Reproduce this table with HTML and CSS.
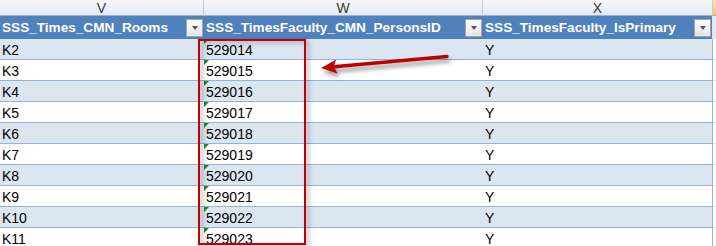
FILE: index.html
```html
<!DOCTYPE html>
<html>
<head>
<meta charset="utf-8">
<link rel="stylesheet" href="styles.css">
</head>
<body>
<div class="sheet">
  <div class="row letters">
    <div class="c v">V</div><div class="c w">W</div><div class="c x">X</div><div class="c y"></div>
  </div>
  <div class="row thead">
    <div class="c v"><span class="t">SSS_Times_CMN_Rooms</span><span class="dd"></span></div>
    <div class="c w"><span class="t">SSS_TimesFaculty_CMN_PersonsID</span><span class="dd"></span></div>
    <div class="c x"><span class="t">SSS_TimesFaculty_IsPrimary</span><span class="dd"></span></div>
    <div class="c y"></div>
  </div>
  <div class="row data odd"><div class="c v">K2</div><div class="c w"><i class="tri"></i>529014</div><div class="c x">Y</div><div class="c y"></div></div>
  <div class="row data"><div class="c v">K3</div><div class="c w"><i class="tri"></i>529015</div><div class="c x">Y</div><div class="c y"></div></div>
  <div class="row data odd"><div class="c v">K4</div><div class="c w"><i class="tri"></i>529016</div><div class="c x">Y</div><div class="c y"></div></div>
  <div class="row data"><div class="c v">K5</div><div class="c w"><i class="tri"></i>529017</div><div class="c x">Y</div><div class="c y"></div></div>
  <div class="row data odd"><div class="c v">K6</div><div class="c w"><i class="tri"></i>529018</div><div class="c x">Y</div><div class="c y"></div></div>
  <div class="row data"><div class="c v">K7</div><div class="c w"><i class="tri"></i>529019</div><div class="c x">Y</div><div class="c y"></div></div>
  <div class="row data odd"><div class="c v">K8</div><div class="c w"><i class="tri"></i>529020</div><div class="c x">Y</div><div class="c y"></div></div>
  <div class="row data"><div class="c v">K9</div><div class="c w"><i class="tri"></i>529021</div><div class="c x">Y</div><div class="c y"></div></div>
  <div class="row data odd"><div class="c v">K10</div><div class="c w"><i class="tri"></i>529022</div><div class="c x">Y</div><div class="c y"></div></div>
  <div class="row data"><div class="c v">K11</div><div class="c w"><i class="tri"></i>529023</div><div class="c x">Y</div><div class="c y"></div></div>
</div>
<div class="callout"></div>
<svg class="arrow" width="716" height="246" viewBox="0 0 716 246">
  <line x1="447" y1="56.5" x2="334" y2="66.8" stroke="#c00000" stroke-width="3.5" stroke-linecap="round"/>
  <polygon points="321,68 336.2,59.4 333.5,66.6 337.6,73.4" fill="#c00000"/>
</svg>
</body>
</html>
```

FILE: styles.css
```css
html, body {
  margin: 0;
  padding: 0;
  background: #ffffff;
}
body {
  width: 716px;
  height: 246px;
  overflow: hidden;
  position: relative;
  font-family: "Liberation Sans", Arial, sans-serif;
  font-size: 14px;
  color: #000;
}
.sheet {
  display: flex;
  flex-direction: column;
}
.row {
  display: flex;
}
.c {
  box-sizing: border-box;
  flex: none;
  display: flex;
  align-items: center;
  white-space: nowrap;
  overflow: hidden;
}
.v { width: 204px; }
.w { width: 279px; }
.x { width: 230px; }
.y { flex: 1; }

/* column letters row */
.letters {
  height: 16px;
}
.letters .c {
  justify-content: center;
  background: linear-gradient(#f7f8fa, #e6e9ee);
  border-right: 1px solid #c6ccd5;
  border-bottom: 1px solid #9fb1c6;
  color: #3a3a3a;
  font-size: 14px;
  padding-top: 1px;
}
.letters .y {
  background: linear-gradient(#fde6b0, #f5c46c);
  border-right: none;
  border-bottom: 1px solid #e3a74a;
}

/* table header */
.thead {
  height: 23px;
}
.thead .c {
  background: #4f81bd;
  color: #ffffff;
  font-weight: bold;
  font-size: 13.6px;
  justify-content: space-between;
  padding-left: 2px;
  padding-right: 1px;
}
.thead .x {
  border-right: 1px solid #dce4ee;
}
.thead .y {
  background: #e4e9f0;
  padding: 0;
}
.dd {
  box-sizing: border-box;
  width: 17px;
  height: 18px;
  border: 1px solid #a3a3a3;
  background: linear-gradient(#ffffff, #e4e4e4);
  display: flex;
  align-items: center;
  justify-content: center;
}
.dd::after {
  content: "";
  width: 0;
  height: 0;
  border-left: 3.5px solid transparent;
  border-right: 3.5px solid transparent;
  border-top: 4px solid #555555;
}

/* data rows */
.data {
  height: 21px;
}
.data .c {
  border-bottom: 1px solid #95b3d7;
  padding-left: 2px;
  padding-top: 1px;
  position: relative;
}
.data.odd .v, .data.odd .w, .data.odd .x {
  background: #dce6f1;
}
.data .x {
  border-right: 1px solid #95b3d7;
}
.data .y {
  border-bottom: 1px solid #dfe3e8;
  padding: 0;
}
.tri {
  position: absolute;
  left: 0;
  top: 0;
  width: 0;
  height: 0;
  border-top: 5px solid #1e8a1e;
  border-right: 5px solid transparent;
}

/* overlay annotations */
.callout {
  position: absolute;
  left: 198px;
  top: 39px;
  width: 108px;
  height: 206px;
  box-sizing: border-box;
  border: 2px solid #c00000;
  filter: drop-shadow(3px 2px 2px rgba(0, 0, 0, 0.35));
}
.arrow {
  position: absolute;
  left: 0;
  top: 0;
  pointer-events: none;
  filter: drop-shadow(2px 4px 2px rgba(0, 0, 0, 0.4));
}
```
